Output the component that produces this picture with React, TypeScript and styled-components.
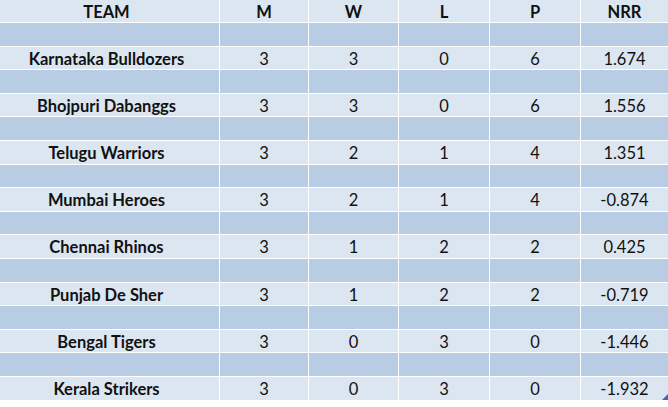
import React from "react";
import styled, { createGlobalStyle } from "styled-components";

const GlobalStyle = createGlobalStyle`
  html, body {
    margin: 0;
    padding: 0;
    background: #ffffff;
    overflow: hidden;
  }
  body {
    font-family: Lato, "Open Sans", "Liberation Sans", sans-serif;
  }
`;

type Team = {
  name: string;
  m: number;
  w: number;
  l: number;
  p: number;
  nrr: string;
};

const teams: Team[] = [
  { name: "Karnataka Bulldozers", m: 3, w: 3, l: 0, p: 6, nrr: "1.674" },
  { name: "Bhojpuri Dabanggs", m: 3, w: 3, l: 0, p: 6, nrr: "1.556" },
  { name: "Telugu Warriors", m: 3, w: 2, l: 1, p: 4, nrr: "1.351" },
  { name: "Mumbai Heroes", m: 3, w: 2, l: 1, p: 4, nrr: "-0.874" },
  { name: "Chennai Rhinos", m: 3, w: 1, l: 2, p: 2, nrr: "0.425" },
  { name: "Punjab De Sher", m: 3, w: 1, l: 2, p: 2, nrr: "-0.719" },
  { name: "Bengal Tigers", m: 3, w: 0, l: 3, p: 0, nrr: "-1.446" },
  { name: "Kerala Strikers", m: 3, w: 0, l: 3, p: 0, nrr: "-1.932" },
];

const Wrapper = styled.div`
  position: relative;
  width: 668px;
  height: 407px;
  background: #ffffff;
`;

const Table = styled.div`
  display: grid;
  grid-template-columns: 219px 88px 89px 90px 90px 1fr;
  grid-template-rows: 22px repeat(16, 22.6px);
  column-gap: 1px;
  row-gap: 1px;
  background: #ffffff;
  width: 668px;
`;

const Cell = styled.div<{ $band?: boolean; $bold?: boolean; $team?: boolean }>`
  display: flex;
  align-items: center;
  justify-content: center;
  padding-top: 2px;
  background: ${(p) => (p.$band ? "#b8cce4" : "#dce6f1")};
  color: #111111;
  font-size: 16.5px;
  font-weight: ${(p) => (p.$bold ? 700 : 400)};
  padding-right: ${(p) => (p.$team ? "6px" : "0")};
  white-space: nowrap;
  line-height: 1;
`;

const ResizeHandle = styled.div`
  position: absolute;
  right: 0;
  top: 394px;
  width: 0;
  height: 0;
  border-left: 6px solid transparent;
  border-bottom: 6px solid #3e6aa8;
`;

const headers = ["TEAM", "M", "W", "L", "P", "NRR"];

export default function App() {
  return (
    <Wrapper>
      <GlobalStyle />
      <Table>
        {headers.map((h, i) => (
          <Cell key={h} $bold $team={i === 0}>
            {h}
          </Cell>
        ))}
        {teams.map((t) => (
          <React.Fragment key={t.name}>
            {headers.map((h) => (
              <Cell key={"b" + h} $band />
            ))}
            <Cell $bold $team>
              {t.name}
            </Cell>
            <Cell>{t.m}</Cell>
            <Cell>{t.w}</Cell>
            <Cell>{t.l}</Cell>
            <Cell>{t.p}</Cell>
            <Cell>{t.nrr}</Cell>
          </React.Fragment>
        ))}
      </Table>
      <ResizeHandle />
    </Wrapper>
  );
}
